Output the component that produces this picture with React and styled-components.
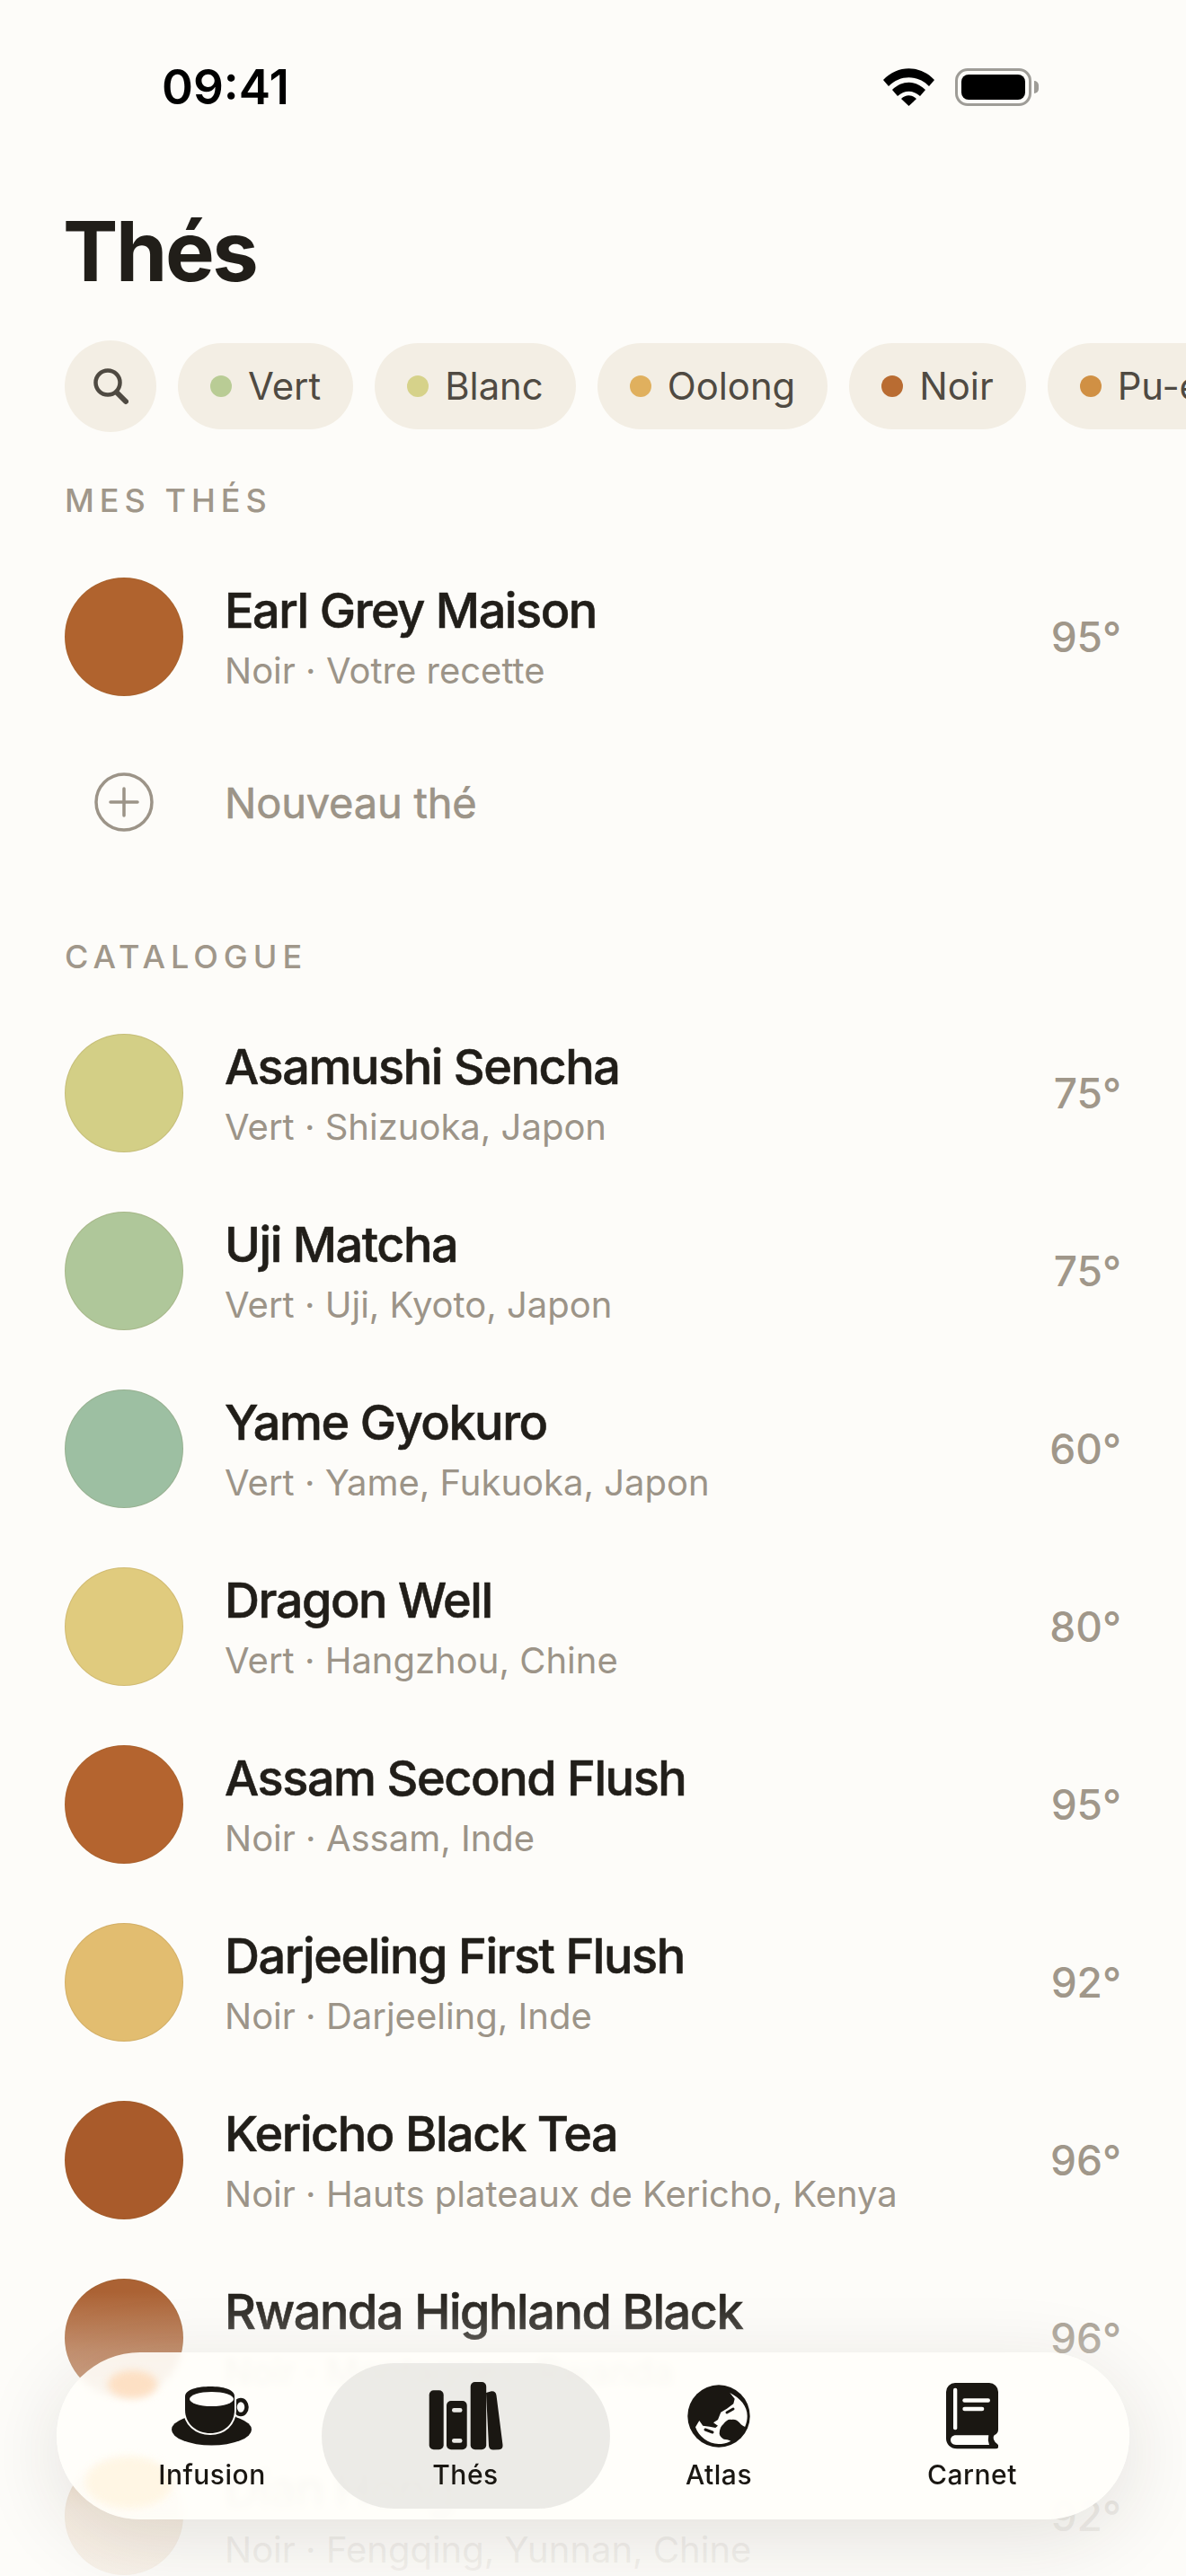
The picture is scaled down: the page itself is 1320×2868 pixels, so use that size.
import React from "react";
import styled, { createGlobalStyle } from "styled-components";

const GlobalStyle = createGlobalStyle`
  html, body {
    margin: 0;
    padding: 0;
    background: #FDFCF9;
  }
  body {
    font-family: "Inter", "Noto Sans", sans-serif;
    color: #211E19;
  }
`;

const Screen = styled.div`
  position: relative;
  width: 1320px;
  height: 2868px;
  overflow: hidden;
  background: #FDFCF9;
`;

const StatusBar = styled.div`
  display: flex;
  justify-content: space-between;
  align-items: center;
  height: 194px;
  padding: 0 172px 0 180px;
  box-sizing: border-box;
`;

const Clock = styled.div`
  font-size: 53px;
  font-weight: 600;
  color: #000;
  line-height: 1;
`;

const StatusIcons = styled.div`
  display: flex;
  align-items: center;
  gap: 23px;
`;

const Battery = styled.div`
  position: relative;
  width: 85px;
  height: 42px;
  box-sizing: border-box;
  border: 3px solid #9E9C97;
  border-radius: 14px;
  padding: 4px;
  &::after {
    content: "";
    position: absolute;
    right: -11px;
    top: 11px;
    width: 5px;
    height: 14px;
    border-radius: 0 5px 5px 0;
    background: #9E9C97;
  }
`;

const BatteryFill = styled.div`
  width: 100%;
  height: 100%;
  background: #000;
  border-radius: 8px;
`;

const Title = styled.h1`
  margin: 0;
  padding: 0 72px 14px 70px;
  height: 185px;
  box-sizing: border-box;
  display: flex;
  align-items: center;
  font-size: 92px;
  font-weight: 700;
  letter-spacing: -2.4px;
  color: #211E19;
`;

const FilterBar = styled.div`
  display: flex;
  align-items: center;
  gap: 24px;
  padding-left: 72px;
  height: 102px;
  overflow: hidden;
`;

const SearchButton = styled.div`
  flex: none;
  width: 102px;
  height: 102px;
  border-radius: 50%;
  background: #F3EEE4;
  display: flex;
  align-items: center;
  justify-content: center;
  color: #4F4A42;
`;

const Chip = styled.div`
  flex: none;
  display: flex;
  align-items: center;
  gap: 18px;
  height: 96px;
  padding: 0 36px;
  border-radius: 48px;
  background: #F3EEE4;
  font-size: 41.8px;
  color: #4F4A42;
`;

const ChipDot = styled.span`
  width: 24px;
  height: 24px;
  border-radius: 50%;
  background: ${(p) => p.$color};
`;

const SectionLabel = styled.div`
  height: 40px;
  line-height: 40px;
  padding: 0 72px;
  font-size: 36px;
  font-weight: 500;
  letter-spacing: 6px;
  color: #A0978A;
  margin-top: ${(p) => p.$top}px;
  margin-bottom: 33px;
`;

const Row = styled.div`
  display: flex;
  align-items: center;
  height: 198px;
  padding: 0 72px 0 72px;
`;

const Swatch = styled.div`
  flex: none;
  width: 132px;
  height: 132px;
  box-sizing: border-box;
  border-radius: 50%;
  background: ${(p) => p.$color};
  border: 1.5px solid ${(p) => p.$edge || "rgba(120,90,40,0.14)"};
`;

const Info = styled.div`
  flex: 1;
  min-width: 0;
  margin-left: 46px;
  padding-top: 10px;
`;

const Name = styled.div`
  font-size: 54px;
  line-height: 66px;
  font-weight: 500;
  -webkit-text-stroke: 0.6px #211E19;
  letter-spacing: -1.45px;
  color: #211E19;
`;

const Sub = styled.div`
  font-size: 40px;
  line-height: 68px;
  color: #9C9488;
`;

const Temp = styled.div`
  font-size: 46px;
  font-weight: 500;
  color: #A0978A;
`;

const AddRow = styled.div`
  display: flex;
  align-items: center;
  height: 170px;
  padding-left: 72px;
`;

const AddIcon = styled.div`
  flex: none;
  width: 132px;
  display: flex;
  justify-content: center;
`;

const AddLabel = styled.div`
  margin-left: 46px;
  font-size: 47px;
  font-weight: 400;
  -webkit-text-stroke: 0.6px #9C9488;
  letter-spacing: -0.2px;
  color: #9C9488;
`;

const Fog = styled.div`
  position: absolute;
  left: 0;
  right: 0;
  bottom: 0;
  height: 368px;
  background: linear-gradient(
    to bottom,
    rgba(253, 252, 249, 0) 0%,
    rgba(253, 252, 249, 0) 14%,
    rgba(253, 252, 249, 0.3) 32%,
    rgba(253, 252, 249, 0.84) 80%,
    rgba(253, 252, 249, 0.9) 100%
  );
`;

const TabBar = styled.nav`
  position: absolute;
  left: 63px;
  top: 2619px;
  width: 1194px;
  height: 186px;
  box-sizing: border-box;
  border-radius: 93px;
  padding: 12px 34px 12px 32px;
  display: grid;
  grid-template-columns: repeat(4, 1fr);
  overflow: visible;
  background: rgba(255, 254, 250, 0.9);
  backdrop-filter: blur(4px);
  box-shadow: 0 20px 90px rgba(40, 35, 25, 0.12);
`;

const Refraction = styled.div`
  position: absolute;
  left: ${(p) => p.$x}px;
  top: ${(p) => p.$y}px;
  width: ${(p) => p.$w}px;
  height: ${(p) => p.$h}px;
  border-radius: 50%;
  background: ${(p) => p.$color};
  filter: blur(4px);
`;

const Tab = styled.div`
  position: relative;
  display: flex;
  flex-direction: column;
  align-items: center;
  padding-top: 20px;
  ${(p) =>
    p.$active &&
    `
    &::before {
      content: "";
      position: absolute;
      top: 0;
      bottom: 0;
      left: -19px;
      right: -20px;
      border-radius: 81px;
      background: rgba(228, 227, 223, 0.72);
    }
  `}
`;

const TabIcon = styled.div`
  position: relative;
  height: 78px;
  display: flex;
  align-items: center;
  justify-content: center;
`;

const TabLabel = styled.div`
  position: relative;
  margin-top: 6px;
  font-size: 30px;
  line-height: 40px;
  font-weight: 500;
  letter-spacing: 0.5px;
  color: #1A1712;
`;

const Wifi = () => (
  <svg width="57" height="42" viewBox="0 0 57 42">
    <path d="M0 13 C16 -4 41 -4 57 13 L51 20 C38 7 19 7 6 20 Z" fill="#000" />
    <path d="M10 24 C21 13 36 13 47 24 L41 31 C33 24 24 24 16 31 Z" fill="#000" />
    <path d="M20 34 C25 29 32 29 37 34 L28.5 42 Z" fill="#000" />
  </svg>
);

const SearchIcon = () => (
  <svg width="40" height="42" viewBox="0 0 40 42" fill="none" stroke="currentColor" strokeWidth="4.5" strokeLinecap="round">
    <circle cx="17" cy="17" r="13.5" />
    <path d="M27 28 L37 38" strokeWidth="6" />
  </svg>
);

const PlusIcon = () => (
  <svg width="66" height="66" viewBox="0 0 66 66" fill="none" stroke="#9C9488" strokeWidth="3.5" strokeLinecap="round">
    <circle cx="33" cy="33" r="31" />
    <path d="M33 18 V48 M18 33 H48" />
  </svg>
);

const CupIcon = () => (
  <svg width="90" height="66" viewBox="0 0 90 66">
    <ellipse cx="44.5" cy="48" rx="44.5" ry="17.5" fill="#1A1712" />
    <ellipse cx="77" cy="23" rx="6.5" ry="8" fill="none" stroke="#1A1712" strokeWidth="4.5" />
    <path
      d="M15 11 C15 3 30 0 43 0 C57 0 70 3 70 11 V26 C70 42 58 52 43 52 C28 52 15 42 15 26 Z"
      fill="#1A1712"
      stroke="#FFFEFA"
      strokeWidth="4"
      paintOrder="stroke"
    />
    <ellipse cx="44.5" cy="14" rx="24.5" ry="8" fill="#FFFEFA" />
  </svg>
);

const BooksIcon = () => (
  <svg width="83" height="76" viewBox="0 0 83 76" fill="#1A1712">
    <rect x="0.7" y="9.3" width="16" height="66" rx="5" />
    <rect x="20" y="21" width="22.7" height="54.3" rx="5" />
    <rect x="26" y="29" width="11.5" height="4.7" rx="2.3" fill="#E9E8E4" />
    <rect x="26" y="63" width="11.5" height="4.7" rx="2.3" fill="#E9E8E4" />
    <rect x="46.7" y="0" width="17.5" height="75.3" rx="5" />
    <path d="M64 12 L70 10.3 Q75 10 75.5 15 L82.5 70 Q83 75 78.5 75.3 L72 75.5 Q67.5 75.5 67 71 Z" />
  </svg>
);

const GlobeIcon = () => (
  <svg width="70" height="70" viewBox="0 0 70 70">
    <circle cx="35" cy="35" r="34.7" fill="#1A1712" />
    <path
      d="M47.3 9 C59 15 66.7 24 66.7 34.7 C66.7 52 52 66 34.7 66 C23 66 13 58 9 47.3 L13.3 40 L17.3 45.7 L24.7 46.7 L31.3 48 L34 45.7 L29 42.3 L34 39 L37.3 30.7 L44 26.7 L51.3 21.3 L52.7 15.7 Z"
      fill="#FFFEFA"
    />
    <path
      d="M35.7 54.7 C36 48 38 46 40 44 C43 40 46 38 49 39 C53 38 56 40 58 42.3 C60 45 62 46 64.7 47.3 C62 52 60 55 59 57.3 C55 61 52 63 49 63.3 C46 61 43 61 40.7 60.7 C38 59 36 57 35.7 54.7 Z"
      fill="#1A1712"
    />
    <path d="M20 50 L28 53 M44 31 L51 27" stroke="#1A1712" strokeWidth="3" strokeLinecap="round" />
  </svg>
);

const NotebookIcon = () => (
  <svg width="58" height="74" viewBox="0 0 58 74">
    <path
      d="M10 0 H48 A10 10 0 0 1 58 10 V52 Q58 56 54 58 Q52 59 53 63 Q54 66 57 68 Q59 70 58 72 Q57.5 73.3 55 73.3 H12 C5 73.3 0 68 0 62 V10 A10 10 0 0 1 10 0 Z"
      fill="#1A1712"
    />
    <rect x="8" y="5.7" width="4.3" height="46.6" rx="2" fill="#FFFEFA" />
    <rect x="18.3" y="17.3" width="30.7" height="4.4" rx="2.2" fill="#FFFEFA" />
    <rect x="18.3" y="26.7" width="24" height="4.6" rx="2.3" fill="#FFFEFA" />
    <path d="M11 58.3 H47.3 Q46 64 48 69 H11 C7 69 5 66.5 5 63.6 C5 60.8 7 58.3 11 58.3 Z" fill="#FFFEFA" />
  </svg>
);

const filters = [
  { label: "Vert", color: "#B9CC95" },
  { label: "Blanc", color: "#D6D28A" },
  { label: "Oolong", color: "#E0B05E" },
  { label: "Noir", color: "#B96C32" },
  { label: "Pu-erh", color: "#D09044" },
];

const teas = [
  { name: "Asamushi Sencha", sub: "Vert · Shizuoka, Japon", temp: 75, color: "#D3CF86" },
  { name: "Uji Matcha", sub: "Vert · Uji, Kyoto, Japon", temp: 75, color: "#AFC79A" },
  { name: "Yame Gyokuro", sub: "Vert · Yame, Fukuoka, Japon", temp: 60, color: "#9DBFA2" },
  { name: "Dragon Well", sub: "Vert · Hangzhou, Chine", temp: 80, color: "#E0CB7E" },
  { name: "Assam Second Flush", sub: "Noir · Assam, Inde", temp: 95, color: "#B4642F" },
  { name: "Darjeeling First Flush", sub: "Noir · Darjeeling, Inde", temp: 92, color: "#E2BD70" },
  { name: "Kericho Black Tea", sub: "Noir · Hauts plateaux de Kericho, Kenya", temp: 96, color: "#A95B2B" },
  { name: "Rwanda Highland Black", sub: "Noir · Montagnes, Rwanda", temp: 96, color: "#AB6234" },
  { name: "Dian Hong", sub: "Noir · Fengqing, Yunnan, Chine", temp: 92, color: "#CF9A62" },
];

const tabs = [
  { label: "Infusion", icon: <CupIcon /> },
  { label: "Thés", icon: <BooksIcon />, active: true },
  { label: "Atlas", icon: <GlobeIcon /> },
  { label: "Carnet", icon: <NotebookIcon /> },
];

const TeaRow = ({ name, sub, temp, color }) => (
  <Row>
    <Swatch $color={color} />
    <Info>
      <Name>{name}</Name>
      <Sub>{sub}</Sub>
    </Info>
    <Temp>{temp}°</Temp>
  </Row>
);

const App = () => (
  <Screen>
    <GlobalStyle />
    <StatusBar>
      <Clock>09:41</Clock>
      <StatusIcons>
        <Wifi />
        <Battery>
          <BatteryFill />
        </Battery>
      </StatusIcons>
    </StatusBar>
    <Title>Thés</Title>
    <FilterBar>
      <SearchButton>
        <SearchIcon />
      </SearchButton>
      {filters.map((f) => (
        <Chip key={f.label}>
          <ChipDot $color={f.color} />
          {f.label}
        </Chip>
      ))}
    </FilterBar>

    <SectionLabel $top={56}>MES THÉS</SectionLabel>
    <TeaRow name="Earl Grey Maison" sub="Noir · Votre recette" temp={95} color="#B0632E" />
    <AddRow>
      <AddIcon>
        <PlusIcon />
      </AddIcon>
      <AddLabel>Nouveau thé</AddLabel>
    </AddRow>

    <SectionLabel $top={67}>CATALOGUE</SectionLabel>
    {teas.map((t) => (
      <TeaRow key={t.name} {...t} />
    ))}

    <Fog />
    <TabBar>
      <Refraction $x={57} $y={20} $w={55} $h={31} $color="#FDE0C4" />
      <Refraction $x={32} $y={116} $w={97} $h={58} $color="#FFF6E4" />
      {tabs.map((t) => (
        <Tab key={t.label} $active={t.active}>
          <TabIcon>{t.icon}</TabIcon>
          <TabLabel>{t.label}</TabLabel>
        </Tab>
      ))}
    </TabBar>
  </Screen>
);

export default App;
